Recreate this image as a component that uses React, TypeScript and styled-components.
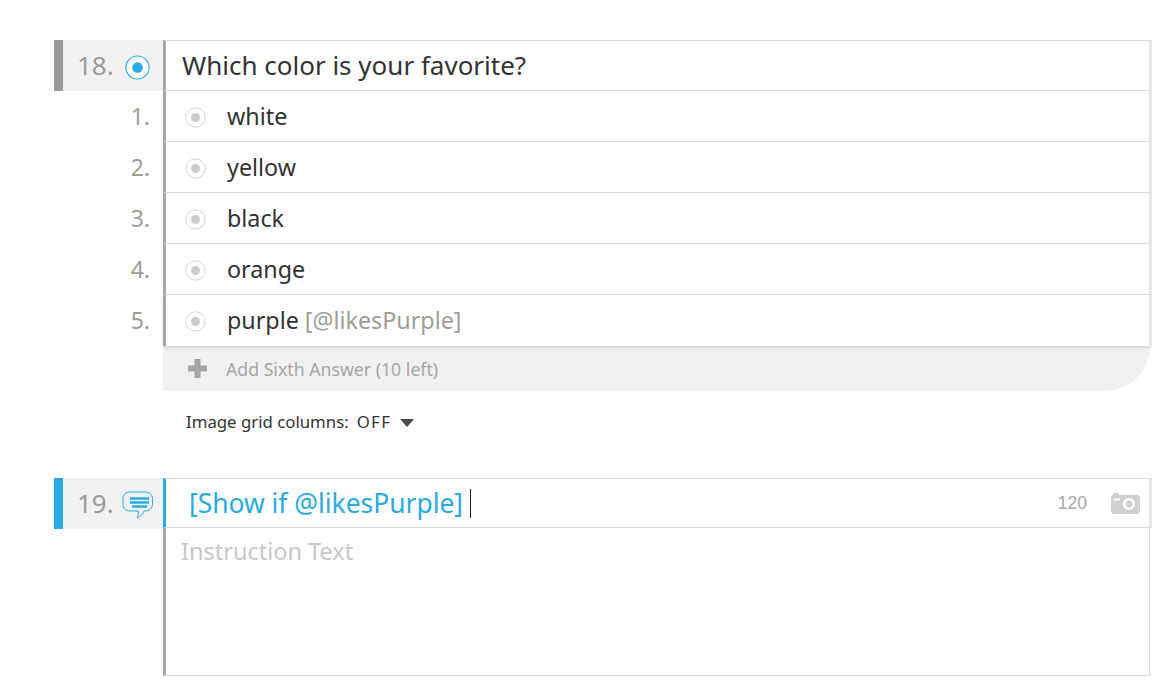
import React from 'react';
import styled, { createGlobalStyle } from 'styled-components';

const FONT = `"Noto Sans", "Open Sans", sans-serif`;
const GRAY_RAIL = '#a6a6a6';
const BLUE = '#29abe2';
const LINE = '#dcdcdc';

const GlobalStyle = createGlobalStyle`
  html, body {
    margin: 0;
    padding: 0;
    background: #fff;
    font-family: ${FONT};
    overflow: hidden;
  }
`;

const Page = styled.div`
  padding: 40px 0 0 54px;
  width: 1152px;
  height: 689px;
  box-sizing: border-box;
`;

const Row = styled.div<{ height : number }>`
  display: flex;
  height: ${p => p.height}px;
`;

const NumberCell = styled.div<{ accent : string }>`
  width: 109px;
  height: 51px;
  box-sizing: border-box;
  flex: none;
  display: flex;
  align-items: center;
  background: #f1f1f1;
  border-left: 9px solid ${p => p.accent};
  padding-left: 14px;
`;

const QuestionNumber = styled.span`
  font-size: 26px;
  color: #9b9b9b;
  width: 48px;
  margin-bottom: 2px;
`;

const AnswerNumber = styled.div`
  width: 109px;
  flex: none;
  box-sizing: border-box;
  padding-right: 13px;
  text-align: right;
  font-size: 23px;
  line-height: 50px;
  color: #a09d96;
`;

const Body = styled.div<{ rail : string }>`
  width: 989px;
  box-sizing: border-box;
  flex: none;
  display: flex;
  align-items: center;
  background: #fff;
  border-left: 3px solid ${p => p.rail};
  border-right: 3px solid #e6e6e6;
  border-bottom: 1px solid ${LINE};
`;

const QuestionBody = styled(Body)`
  border-top: 1px solid ${LINE};
  padding: 0 0 2px 16px;
  font-size: 26px;
  color: #333;
`;

const AnswerBody = styled(Body)`
  padding-left: 19px;
  font-size: 23.3px;
  color: #333;
`;

const LastAnswer = styled(AnswerBody)`
  border-bottom: none;
  padding-bottom: 1px;
  position: relative;
  z-index: 1;
  box-shadow: 0 2px 4px rgba(0, 0, 0, 0.12);
`;

const RadioSlot = styled.span<{ nudge : number }>`
  display: flex;
  margin-top: ${p => p.nudge}px;
`;

const Label = styled.span`
  margin-left: 21px;
`;

const Variable = styled.span`
  color: #a09d96;
  margin-left: 6px;
`;

const AddRow = styled.div`
  margin-left: 109px;
  width: 987px;
  height: 45px;
  box-sizing: border-box;
  display: flex;
  align-items: center;
  padding-left: 25px;
  background: #f1f1f1;
  border-bottom-right-radius: 45px;
  font-size: 17.7px;
  color: #a6a6a6;
`;

const AddText = styled.span`
  margin-left: 19px;
`;

const GridSetting = styled.div`
  margin-left: 132px;
  height: 87px;
  padding-top: 18px;
  box-sizing: border-box;
  display: flex;
  align-items: flex-start;
  font-size: 16.8px;
  line-height: 26px;
  color: #333;
`;

const GridValue = styled.span`
  margin-left: 8px;
  letter-spacing: 1.3px;
`;

const Caret = styled.span`
  margin: 10px 0 0 9px;
  border-left: 7px solid transparent;
  border-right: 7px solid transparent;
  border-top: 8px solid #4a4a4a;
`;

const TitleBody = styled(Body)`
  border-top: 1px solid ${LINE};
  padding: 0 0 0 23px;
  font-size: 26.4px;
  color: ${BLUE};
`;

const Cursor = styled.span`
  width: 1px;
  height: 29px;
  margin-left: 7px;
  background: #222;
`;

const Counter = styled.span`
  margin-left: auto;
  font-family: "Liberation Sans", sans-serif;
  font-size: 17.5px;
  color: #a8a8a8;
`;

const CameraSlot = styled.span`
  display: flex;
  margin: 0 9px 0 24px;
`;

const CommentSlot = styled.span`
  display: flex;
  margin: 2px 0 0 -3px;
`;

const Instruction = styled.div`
  margin-left: 109px;
  width: 987px;
  height: 148px;
  box-sizing: border-box;
  padding: 7px 0 0 15px;
  border-left: 3px solid ${GRAY_RAIL};
  border-right: 1px solid ${LINE};
  border-bottom: 1px solid ${LINE};
  font-size: 23.5px;
  line-height: 32px;
  color: #c8c8c8;
`;

const RadioIcon = ({ size, color, dot } : { size : number, color : string, dot : string }) => (
  <svg width={size} height={size} viewBox="0 0 26 26" style={{ flex: 'none' }}>
    <circle cx="13" cy="13" r="12" fill="#fff" stroke={color} strokeWidth="1.2" />
    <circle cx="13" cy="13" r="5.5" fill={dot} />
  </svg>
);

const CommentIcon = () => (
  <svg width="32" height="28" viewBox="0 0 32 28" fill="none" style={{ flex: 'none' }}>
    <path
      d="M8 1h15c4 0 7.500 2.600 7.500 6.500v6c0 3.700-3.500 6.500-7.500 6.500h-1c-.8 2.800-3.500 5.600-7 7 1.200-2 1.600-4.500 1.300-7H8c-4 0-7-2.800-7-6.500v-6C1 3.600 4 1 8 1z"
      stroke={BLUE}
      strokeWidth="1"
    />
    <path d="M8 7.500h19M8 11.500h19M10 15.500h15" stroke={BLUE} strokeWidth="2.500" />
  </svg>
);

const CameraIcon = () => (
  <svg width="29" height="21" viewBox="0 0 29 21" style={{ flex: 'none' }}>
    <path
      fillRule="evenodd"
      fill="#d0d0d0"
      d="M2 2V1c0-.6.4-1 1-1h4c.6 0 1 .4 1 1v1h18c1.700 0 3 1.300 3 3v13c0 1.700-1.300 3-3 3H3c-1.700 0-3-1.300-3-3V5c0-1.500 1-3 2-3zM3 5.500v2h6v-2zM18 5a6 6 0 1 0 0 12 6 6 0 0 0 0-12z"
    />
    <circle cx="18" cy="11" r="3.500" fill="#d0d0d0" />
  </svg>
);

const PlusIcon = () => (
  <svg width="19" height="19" viewBox="0 0 19 19" style={{ flex: 'none' }}>
    <path d="M6.500 0h6v6.500H19v6h-6.500V19h-6v-6.500H0v-6h6.500z" fill="#a6a6a6" />
  </svg>
);

const answers = ['white', 'yellow', 'black', 'orange'];

const App = () => (
  <Page>
    <GlobalStyle />
    <Row height={51}>
      <NumberCell accent="#999999">
        <QuestionNumber>18.</QuestionNumber>
        <RadioSlot nudge={3}><RadioIcon size={25} color={BLUE} dot={BLUE} /></RadioSlot>
      </NumberCell>
      <QuestionBody rail={GRAY_RAIL}>Which color is your favorite?</QuestionBody>
    </Row>
    {answers.map((answer, i) => (
      <Row height={51} key={answer}>
        <AnswerNumber>{i + 1}.</AnswerNumber>
        <AnswerBody rail={GRAY_RAIL}>
          <RadioSlot nudge={2}><RadioIcon size={21} color="#d4d4d4" dot="#cccccc" /></RadioSlot>
          <Label>{answer}</Label>
        </AnswerBody>
      </Row>
    ))}
    <Row height={51}>
      <AnswerNumber>5.</AnswerNumber>
      <LastAnswer rail={GRAY_RAIL}>
        <RadioSlot nudge={2}><RadioIcon size={21} color="#d4d4d4" dot="#cccccc" /></RadioSlot>
        <Label>purple</Label>
        <Variable>[@likesPurple]</Variable>
      </LastAnswer>
    </Row>
    <AddRow>
      <PlusIcon />
      <AddText>Add Sixth Answer (10 left)</AddText>
    </AddRow>
    <GridSetting>
      Image grid columns:
      <GridValue>OFF</GridValue>
      <Caret />
    </GridSetting>
    <Row height={50}>
      <NumberCell accent={BLUE}>
        <QuestionNumber>19.</QuestionNumber>
        <CommentSlot><CommentIcon /></CommentSlot>
      </NumberCell>
      <TitleBody rail={BLUE}>
        [Show if @likesPurple]
        <Cursor />
        <Counter>120</Counter>
        <CameraSlot><CameraIcon /></CameraSlot>
      </TitleBody>
    </Row>
    <Instruction>Instruction Text</Instruction>
  </Page>
);

export default App;
